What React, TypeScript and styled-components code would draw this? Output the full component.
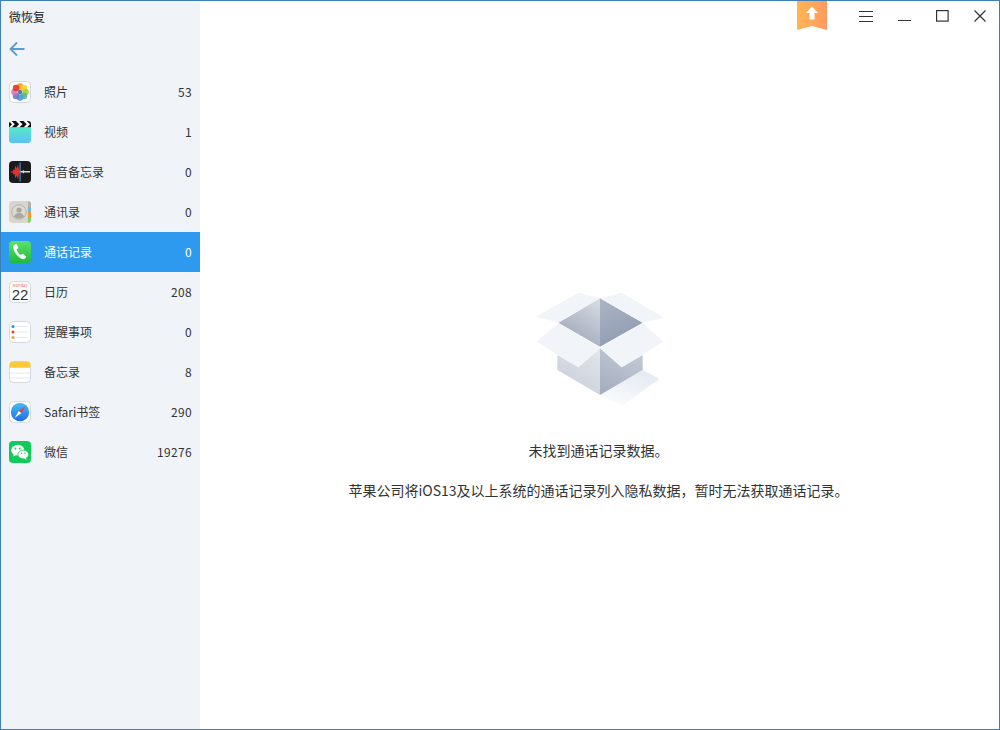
import React from "react";
import styled, { createGlobalStyle } from "styled-components";

const FONT = `"Noto Sans CJK SC", "Noto Sans", sans-serif`;

const Global = createGlobalStyle`
  html, body { margin: 0; padding: 0; background: #fff; }
  * { box-sizing: border-box; }
`;

const Window = styled.div`
  width: 1000px;
  height: 730px;
  display: flex;
  border: 1px solid #3b7fb6;
  font-family: ${FONT};
  color: #333;
  overflow: hidden;
`;

const Sidebar = styled.aside`
  width: 199px;
  flex: none;
  background: #f0f4f8;
  display: flex;
  flex-direction: column;
`;

const AppTitle = styled.div`
  height: 34px;
  padding: 7px 0 0 8px;
  font-size: 12px;
  line-height: 18px;
  color: #222;
`;

const BackButton = styled.div`
  height: 37px;
  padding: 6px 0 0 8px;
  display: flex;
  align-items: flex-start;
`;

const List = styled.ul`
  list-style: none;
  margin: 0;
  padding: 0;
`;

const Row = styled.li<{ $active?: boolean }>`
  height: 40px;
  display: flex;
  align-items: center;
  padding: 0 8px;
  font-size: 12px;
  background: ${(p) => (p.$active ? "#2d9af0" : "transparent")};
  color: ${(p) => (p.$active ? "#fff" : "#333")};
`;

const IconSlot = styled.span`
  width: 22px;
  height: 22px;
  flex: none;
  display: block;
  svg { display: block; }
`;

const Label = styled.span`
  margin-left: 13px;
  padding-bottom: 2px;
  flex: 1;
`;

const Count = styled.span`
  padding-bottom: 2px;
  letter-spacing: 0.35px;
`;

const Main = styled.main`
  flex: 1;
  display: flex;
  flex-direction: column;
  background: #fff;
`;

const TopBar = styled.header`
  height: 40px;
  display: flex;
  align-items: flex-start;
  justify-content: flex-end;
`;

const Ribbon = styled.span`
  width: 30px;
  height: 29px;
  margin-right: 20px;
  display: block;
  svg { display: block; }
`;

const WinControl = styled.span`
  width: 38px;
  height: 30px;
  display: flex;
  align-items: center;
  justify-content: center;
  svg { display: block; }
`;

const Empty = styled.section`
  flex: 1;
  display: flex;
  flex-direction: column;
  align-items: center;
  padding-top: 239px;
`;

const BoxArt = styled.span`
  display: block;
  width: 160px;
  height: 135px;
  svg { display: block; }
`;

const Message = styled.p`
  margin: 25px 0 0;
  padding-right: 2px;
  font-size: 14px;
  line-height: 20px;
  color: #333;
  text-align: center;
`;

const Hint = styled(Message)`
  margin-top: 20px;
`;

const IconFrame = () => (
  <rect x="0.5" y="0.5" width="21" height="21" rx="4" fill="#fff" stroke="#d3d9e0" />
);

const PhotosIcon = () => {
  const petals = ["#f5a020", "#fbd21f", "#9fcf3a", "#4fb98a", "#3f9ce6", "#6f72c0", "#c77ab8", "#e3301f"];
  return (
    <svg width="22" height="22" viewBox="0 0 22 22">
      <IconFrame />
      {petals.map((c, i) => {
        const a = (i * 45 - 90) * (Math.PI / 180);
        return <circle key={c} cx={11 + 5.6 * Math.cos(a)} cy={11 + 5.6 * Math.sin(a)} r="3.3" fill={c} opacity="0.88" />;
      })}
      <circle cx="11" cy="11" r="2.2" fill="#34407f" opacity="0.75" />
    </svg>
  );
};

const VideoIcon = () => (
  <svg width="22" height="22" viewBox="0 0 22 22">
    <defs>
      <linearGradient id="vid" x1="0" y1="0" x2="0" y2="1">
        <stop offset="0" stopColor="#54e8c8" />
        <stop offset="1" stopColor="#5cc2f5" />
      </linearGradient>
    </defs>
    <path d="M0 6.500V3a3 3 0 0 1 3-3h16a3 3 0 0 1 3 3v3.500z" fill="#111" />
    <path d="M0 0h2.500l3.300 3.200-3.300 3.300H0l3-3.300zM7 0h3.200l3.300 3.200-3.300 3.300H7l3.200-3.300zM14.500 0h3.200L21 3.200l-3.300 3.300h-3.200l3.200-3.300z" fill="#fff" />
    <path d="M0 6.500h22V19a3 3 0 0 1-3 3H3a3 3 0 0 1-3-3z" fill="url(#vid)" />
  </svg>
);

const VoiceIcon = () => (
  <svg width="22" height="22" viewBox="0 0 22 22">
    <rect width="22" height="22" rx="4" fill="#1b1b1d" />
    <path d="M1.500 10.500h2l1-2 1 .5 1-4.500 1.200 3 1.300-4 1 5.500.8 1v2l-.8 1-1 5.500-1.300-4-1.200 3-1-4.500-1 .5-1-2h-2z" fill="#e0322b" />
    <rect x="10.500" y="1.500" width="1.200" height="19" fill="#3f8fd6" />
    <path d="M11.500 10h2l1-1 .7 1H21v1.600h-5.800l-.7 1-1-1.200h-2z" fill="#d9d9d9" />
  </svg>
);

const ContactsIcon = () => (
  <svg width="22" height="22" viewBox="0 0 22 22">
    <rect width="22" height="22" rx="4" fill="#d8d5cd" />
    <path d="M19 0a3 3 0 0 1 3 3v3h-3z" fill="#b5b1aa" />
    <rect x="19" y="6" width="3" height="5" fill="#6bb7e8" />
    <rect x="19" y="11" width="3" height="5" fill="#f09a37" />
    <path d="M19 16h3v3a3 3 0 0 1-3 3z" fill="#8cc866" />
    <circle cx="10" cy="11" r="7.200" fill="#dedad2" stroke="#a9a7a2" strokeWidth="0.800" />
    <circle cx="10" cy="9" r="2.600" fill="#a9a7a2" />
    <path d="M5 15.500c1-2.600 3-3.400 5-3.400s4 .8 5 3.400a7 7 0 0 1-10 0z" fill="#a9a7a2" />
  </svg>
);

const PhoneIcon = () => (
  <svg width="22" height="22" viewBox="0 0 22 22">
    <defs>
      <linearGradient id="ph" x1="0" y1="0" x2="0" y2="1">
        <stop offset="0" stopColor="#5be36a" />
        <stop offset="1" stopColor="#1fb83f" />
      </linearGradient>
    </defs>
    <rect width="22" height="22" rx="4" fill="url(#ph)" />
    <path d="M6.400 3.200 4.600 4.400C3.600 5.200 3.800 7 4.900 9.300c1.200 2.600 3.400 5.600 5.600 7.300 1.900 1.500 3.600 2.100 4.600 1.500l1.700-1.300c.5-.4.5-.9.1-1.300l-2.600-2.400c-.4-.3-.8-.3-1.200 0l-1 .7c-.3.2-.6.2-.9 0-1.400-1.200-2.800-3.100-3.500-4.700-.1-.3-.1-.6.2-.8l1-.8c.4-.3.5-.7.3-1.200L7.700 3.500c-.3-.5-.8-.6-1.300-.3z" fill="#fff" />
  </svg>
);

const CalendarIcon = () => (
  <svg width="22" height="22" viewBox="0 0 22 22">
    <IconFrame />
    <text x="11" y="5.500" textAnchor="middle" fontSize="4" fill="#f0695f" fontFamily={FONT}>Monday</text>
    <text x="11" y="19" textAnchor="middle" fontSize="15" fill="#333" fontFamily={`"Liberation Sans", sans-serif`}>22</text>
  </svg>
);

const RemindersIcon = () => (
  <svg width="22" height="22" viewBox="0 0 22 22">
    <IconFrame />
    <circle cx="4" cy="5.500" r="1.500" fill="#2b8cf0" />
    <circle cx="4" cy="11" r="1.500" fill="#ee3b30" />
    <circle cx="4" cy="16.500" r="1.500" fill="#f59d24" />
    <rect x="7.500" y="5" width="11" height="1" fill="#e4e7ec" />
    <rect x="7.500" y="10.500" width="11" height="1" fill="#e4e7ec" />
    <rect x="7.500" y="16" width="11" height="1" fill="#e4e7ec" />
  </svg>
);

const NotesIcon = () => (
  <svg width="22" height="22" viewBox="0 0 22 22">
    <IconFrame />
    <path d="M.5 6V4.500a4 4 0 0 1 4-4h13a4 4 0 0 1 4 4V6z" fill="#fbc93a" />
    <rect x="1" y="6" width="20" height="1" fill="#d9d6cc" />
    <rect x="1" y="11.500" width="20" height="1" fill="#e3e7ec" />
    <rect x="1" y="16.500" width="20" height="1" fill="#e3e7ec" />
  </svg>
);

const SafariIcon = () => (
  <svg width="22" height="22" viewBox="0 0 22 22">
    <defs>
      <linearGradient id="saf" x1="0" y1="0" x2="0" y2="1">
        <stop offset="0" stopColor="#46c1f5" />
        <stop offset="1" stopColor="#1e69e6" />
      </linearGradient>
    </defs>
    <IconFrame />
    <circle cx="11" cy="11" r="9.200" fill="url(#saf)" />
    <path d="M16.500 5 9.800 9.900l2.400 2.300z" fill="#f03a30" />
    <path d="M5.500 17 9.800 9.900l2.400 2.300z" fill="#fff" />
  </svg>
);

const WeChatIcon = () => (
  <svg width="22" height="22" viewBox="0 0 22 22">
    <rect width="22" height="22" rx="4" fill="#0fcc5a" />
    <ellipse cx="8.800" cy="9.200" rx="6.600" ry="5.400" fill="#fff" />
    <path d="M4.800 12.500 4.200 15.500 7.500 13.800z" fill="#fff" />
    <ellipse cx="14.300" cy="13.500" rx="5.400" ry="4.400" fill="#fff" stroke="#0fcc5a" strokeWidth="0.800" />
    <path d="M16.800 16.500 17.600 18.800 14.800 17.300z" fill="#fff" />
    <circle cx="6.500" cy="7.500" r="0.900" fill="#0fcc5a" />
    <circle cx="10.800" cy="7.500" r="0.900" fill="#0fcc5a" />
    <circle cx="12.500" cy="12.300" r="0.700" fill="#0fcc5a" />
    <circle cx="16" cy="12.300" r="0.700" fill="#0fcc5a" />
  </svg>
);

const items: { label: string; count: number; icon: React.ReactNode; active?: boolean }[] = [
  { label: "照片", count: 53, icon: <PhotosIcon /> },
  { label: "视频", count: 1, icon: <VideoIcon /> },
  { label: "语音备忘录", count: 0, icon: <VoiceIcon /> },
  { label: "通讯录", count: 0, icon: <ContactsIcon /> },
  { label: "通话记录", count: 0, icon: <PhoneIcon />, active: true },
  { label: "日历", count: 208, icon: <CalendarIcon /> },
  { label: "提醒事项", count: 0, icon: <RemindersIcon /> },
  { label: "备忘录", count: 8, icon: <NotesIcon /> },
  { label: "Safari书签", count: 290, icon: <SafariIcon /> },
  { label: "微信", count: 19276, icon: <WeChatIcon /> },
];

const BoxIllustration = () => (
  <svg width="160" height="135" viewBox="0 0 480 405">
    <defs>
      <linearGradient id="shadow" x1="0.800" y1="0" x2="0.200" y2="1">
        <stop offset="0" stopColor="#e3e8f1" />
        <stop offset="1" stopColor="#fbfcfd" />
      </linearGradient>
      <linearGradient id="inL" x1="0.800" y1="0" x2="0.300" y2="0.900">
        <stop offset="0" stopColor="#d4d8e0" />
        <stop offset="1" stopColor="#a0a9ba" />
      </linearGradient>
      <linearGradient id="inR" x1="0.300" y1="0" x2="0.700" y2="1">
        <stop offset="0" stopColor="#a9b2c4" />
        <stop offset="1" stopColor="#8f9ab0" />
      </linearGradient>
      <linearGradient id="outL" x1="0.800" y1="0" x2="0.200" y2="1">
        <stop offset="0" stopColor="#e2e5ea" />
        <stop offset="1" stopColor="#c6ccd7" />
      </linearGradient>
      <linearGradient id="outR" x1="0.700" y1="0" x2="0.200" y2="1">
        <stop offset="0" stopColor="#c3c9d5" />
        <stop offset="1" stopColor="#a5aebf" />
      </linearGradient>
    </defs>
    <polygon points="240,345 368,270 418,297 305,378" fill="url(#shadow)" />
    <polygon points="240,55 115,128 240,200" fill="url(#inL)" />
    <polygon points="240,55 368,128 240,200" fill="url(#inR)" />
    <polygon points="175,38 240,55 115,128 48,110" fill="#f1f4f8" />
    <polygon points="305,38 432,113 368,128 240,55" fill="#f1f4f8" />
    <polygon points="112,225 175,262 240,205 240,345 112,270" fill="url(#outL)" />
    <polygon points="240,205 305,262 368,225 368,270 240,345" fill="url(#outR)" />
    <polygon points="115,130 240,205 175,262 50,185" fill="#f1f4f8" />
    <polygon points="368,130 430,185 305,262 240,205" fill="#f1f4f8" />
  </svg>
);

export default function App() {
  return (
    <>
      <Global />
      <Window>
        <Sidebar>
          <AppTitle>微恢复</AppTitle>
          <BackButton>
            <svg width="16" height="16" viewBox="0 0 16 16" fill="none" stroke="#5b9bd5" strokeWidth="1.800">
              <path d="M15.500 8H1.500M8 1.500 1.500 8 8 14.500" />
            </svg>
          </BackButton>
          <List>
            {items.map((it) => (
              <Row key={it.label} $active={it.active}>
                <IconSlot>{it.icon}</IconSlot>
                <Label>{it.label}</Label>
                <Count>{it.count}</Count>
              </Row>
            ))}
          </List>
        </Sidebar>
        <Main>
          <TopBar>
            <Ribbon>
              <svg width="30" height="29" viewBox="0 0 30 29">
                <defs>
                  <linearGradient id="rib" x1="0" y1="0" x2="1" y2="0">
                    <stop offset="0" stopColor="#ffb552" />
                    <stop offset="1" stopColor="#ff9a62" />
                  </linearGradient>
                </defs>
                <path d="M0 0h30v29l-15-4-15 4z" fill="url(#rib)" />
                <path d="M15 5.500 21 12h-3.500v6.500h-5V12H9z" fill="#fff" />
              </svg>
            </Ribbon>
            <WinControl>
              <svg width="14" height="12" viewBox="0 0 14 12" stroke="#333" strokeWidth="1">
                <path d="M0 1.500h14M0 6.500h14M0 11.500h14" />
              </svg>
            </WinControl>
            <WinControl>
              <svg width="14" height="12" viewBox="0 0 14 12" stroke="#333" strokeWidth="1">
                <path d="M1 10.500h13" />
              </svg>
            </WinControl>
            <WinControl>
              <svg width="13" height="12" viewBox="0 0 13 12" fill="none" stroke="#333" strokeWidth="1.200">
                <rect x="0.600" y="0.600" width="11.500" height="10.500" />
              </svg>
            </WinControl>
            <WinControl>
              <svg width="12" height="12" viewBox="0 0 12 12" stroke="#333" strokeWidth="1.200">
                <path d="M.500.500l11 11M11.500.500l-11 11" />
              </svg>
            </WinControl>
          </TopBar>
          <Empty>
            <BoxArt>
              <BoxIllustration />
            </BoxArt>
            <Message>未找到通话记录数据。</Message>
            <Hint>苹果公司将iOS13及以上系统的通话记录列入隐私数据，暂时无法获取通话记录。</Hint>
          </Empty>
        </Main>
      </Window>
    </>
  );
}
